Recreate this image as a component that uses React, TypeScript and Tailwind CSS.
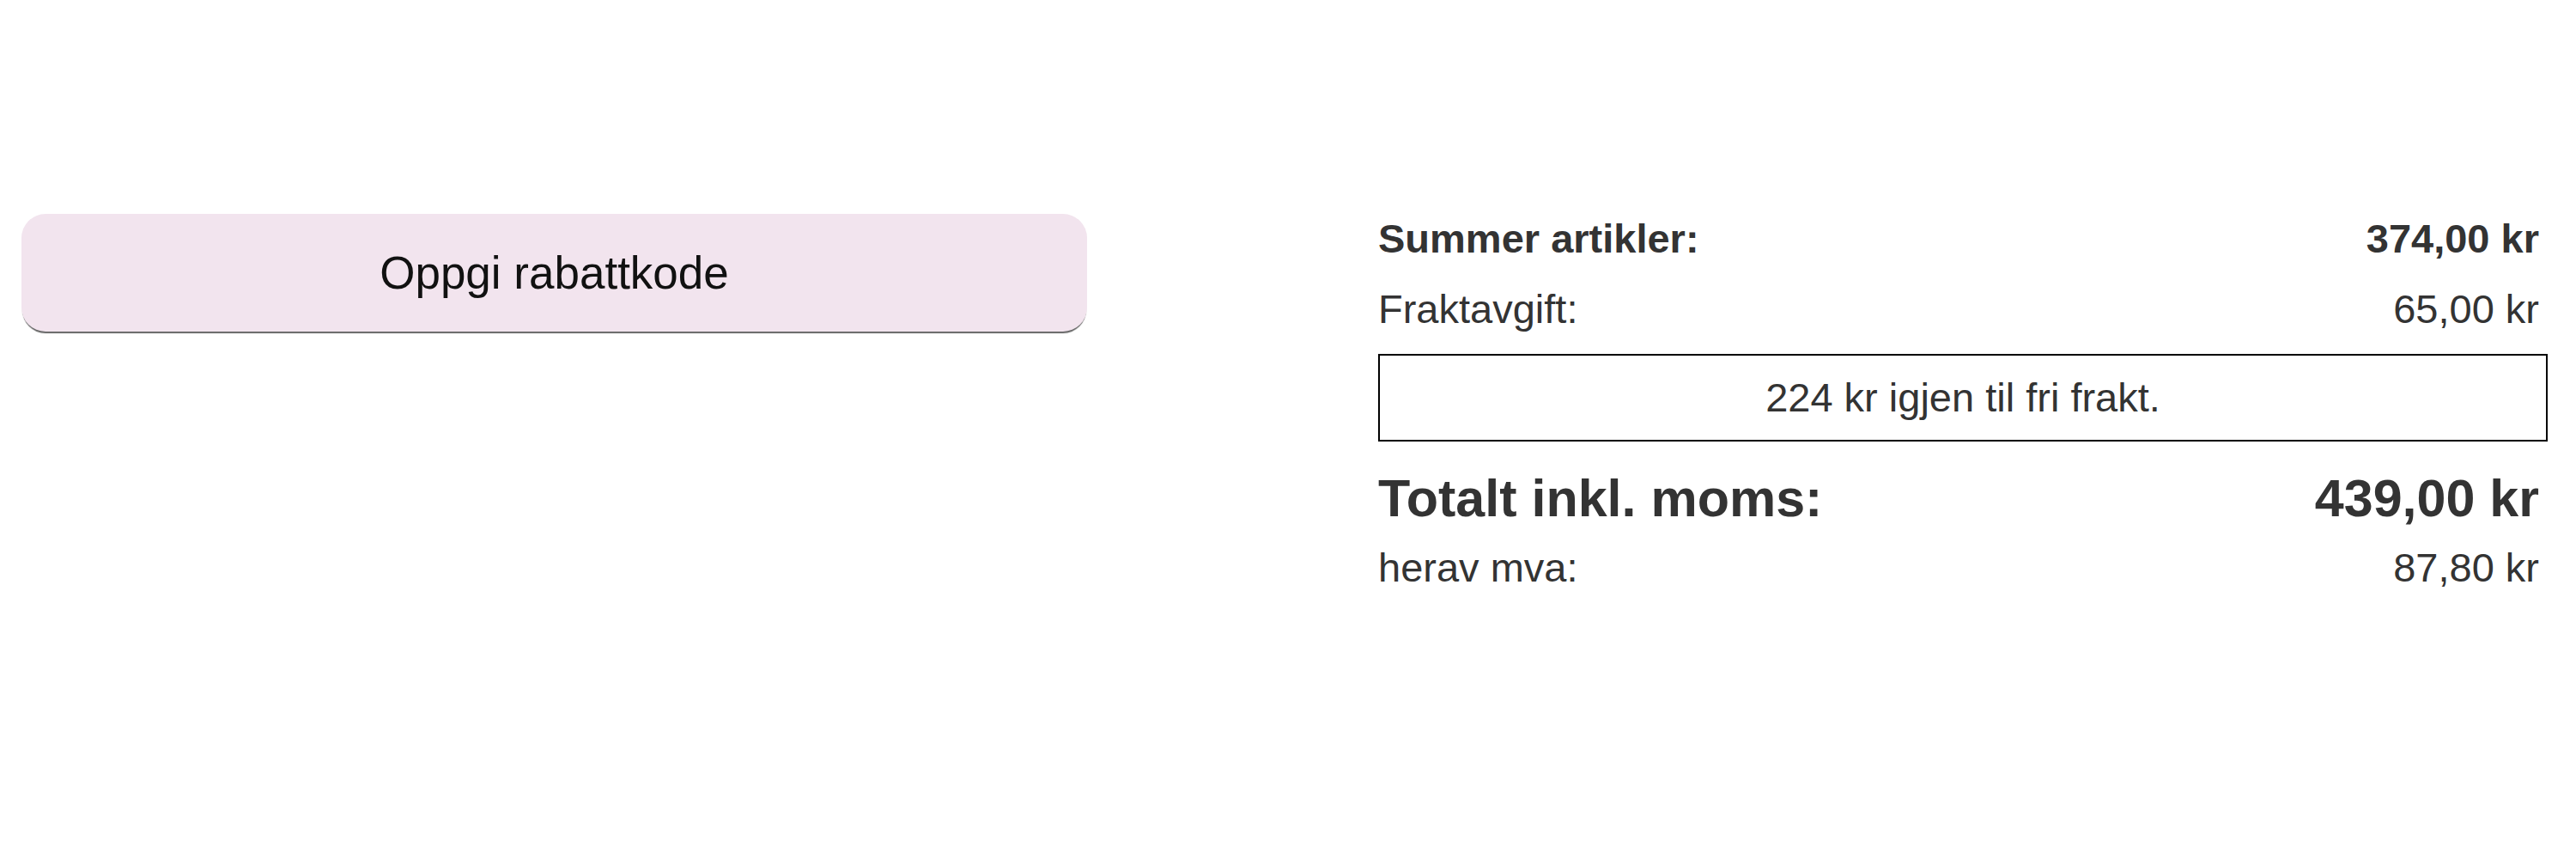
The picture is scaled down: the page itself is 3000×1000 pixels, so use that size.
import React from "react";

const rows = [
    { label: "Summer artikler:", value: "374,00 kr", bold: true },
    { label: "Fraktavgift:", value: "65,00 kr", bold: false },
];

export default function App() {
    return (
        <div
            className="w-[3000px] h-[1000px] bg-white flex items-start pl-[25px] pr-[33px] pt-[249px]"
            style={{ fontFamily: '"Liberation Sans", Arial, sans-serif' }}
        >
            {/* Rabattkode */}
            <div className="w-[1241px]">
                <button className="w-full h-[137px] rounded-[28px] bg-[#f2e4ee] text-[53px] leading-[60px] text-[#111] shadow-[0_3px_1px_-1px_rgba(0,0,0,0.6)]">
                    Oppgi rabattkode
                </button>
            </div>

            {/* Summary */}
            <div className="ml-auto w-[1362px] pt-[2px] text-[#333]">
                <div className="flex flex-col gap-y-[28px]">
                    {rows.map((row) => (
                        <div
                            key={row.label}
                            className={`flex justify-between text-[47px] leading-[54px] ${row.bold ? "font-bold" : ""}`}
                        >
                            <span>{row.label}</span>
                            <span className="pr-[10px]">{row.value}</span>
                        </div>
                    ))}
                </div>

                <div className="mt-[25px] border-2 border-black py-[22px] text-center text-[47px] leading-[54px]">
                    224 kr igjen til fri frakt.
                </div>

                <div className="mt-[32px] flex justify-between text-[61px] leading-[68px] font-bold">
                    <span>Totalt inkl. moms:</span>
                    <span className="pr-[10px]">439,00 kr</span>
                </div>
                <div className="mt-[20px] flex justify-between text-[47px] leading-[54px]">
                    <span>herav mva:</span>
                    <span className="pr-[10px]">87,80 kr</span>
                </div>
            </div>
        </div>
    );
}
